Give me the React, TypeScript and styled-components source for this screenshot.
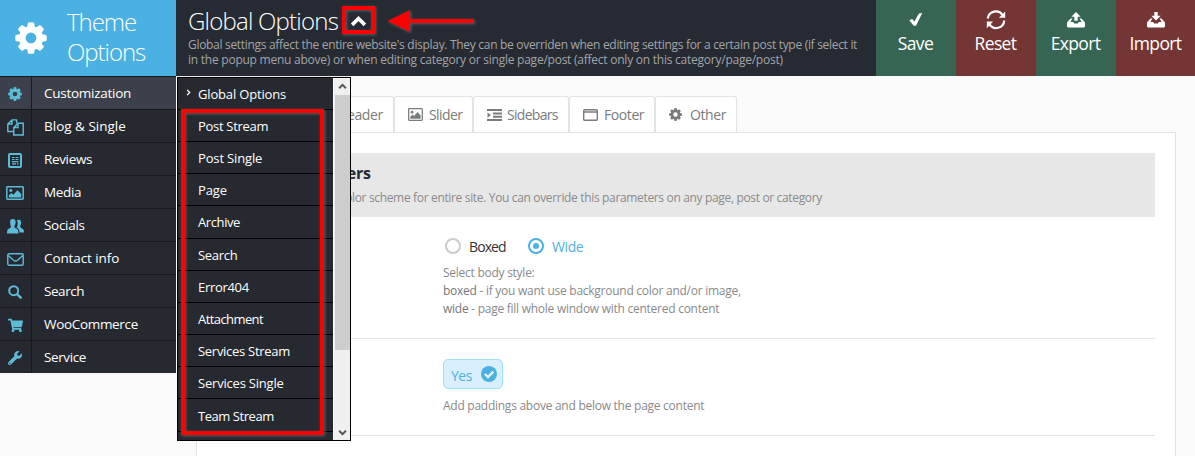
import React from 'react';
import styled, { createGlobalStyle } from 'styled-components';
import { FaShoppingCart, FaWrench } from 'react-icons/fa';

const GlobalStyle = createGlobalStyle`
  * { box-sizing: border-box; }
  html, body { margin: 0; height: 100%; overflow: hidden; }
  body {
    background: #fafafa;
    font-family: 'Open Sans', 'Noto Sans', sans-serif;
    color: #222;
  }
`;

const Page = styled.div`
  position: relative;
  height: 456px;
  overflow: hidden;
`;

/* ---------- header ---------- */

const Header = styled.header`
  display: flex;
  height: 76px;
  margin-right: -1px;
  background: #262a32;
`;

const Brand = styled.div`
  display: flex;
  align-items: center;
  width: 176px;
  padding-left: 15px;
  gap: 20px;
  background: #4bb1e2;
  color: #fff;
`;

const BrandName = styled.div`
  font-size: 24px;
  font-weight: 300;
  line-height: 30px;
  letter-spacing: -1.05px;
  padding-bottom: 2px;
`;

const HeaderInfo = styled.div`
  flex: 1;
  padding: 5px 0 0 12px;
  white-space: nowrap;
`;

const HeaderTitle = styled.h1`
  margin: 0;
  display: flex;
  align-items: center;
  gap: 12px;
  color: #fff;
  font-size: 24px;
  font-weight: 300;
  line-height: 32px;
  letter-spacing: -0.78px;
`;

const HeaderText = styled.p<{ $track: number }>`
  margin: 0;
  color: #a3a5a8;
  font-size: 12px;
  line-height: 15px;
  letter-spacing: ${(p) => p.$track}px;
`;

const Action = styled.button<{ $tone: 'green' | 'red' }>`
  display: flex;
  flex-direction: column;
  align-items: center;
  flex: none;
  width: 80px;
  height: 76px;
  padding: 8px 1px 0 0;
  border: 0;
  background: ${(p) => (p.$tone === 'green' ? '#376554' : '#733634')};
  color: #fff;
  font: 400 17.5px/24px 'Open Sans', sans-serif;
  letter-spacing: -0.65px;
  svg { margin-bottom: -1px; }
`;

/* ---------- body ---------- */

const Body = styled.div`
  display: flex;
  align-items: flex-start;
`;

const Sidebar = styled.nav`
  flex: none;
  width: 176px;
  background: #262a30;
`;

const NavItem = styled.a<{ $active?: boolean }>`
  display: flex;
  height: 33px;
  border-top: 1px solid #17191d;
  background: ${(p) => (p.$active ? '#3b404a' : 'transparent')};
  color: #fff;
`;

const NavIcon = styled.span`
  display: flex;
  align-items: center;
  justify-content: center;
  width: 32px;
  padding: 2px 1px 0 0;
  border-right: 1px solid #17191d;
  color: #5cbcd8;
`;

const NavLabel = styled.span<{ $track: number }>`
  padding-left: 12px;
  font-size: 13.5px;
  line-height: 33px;
  letter-spacing: ${(p) => p.$track}px;
`;

const Main = styled.main`
  flex: 1;
  padding: 20px 19px 0 20px;
`;

const Tabs = styled.div`
  display: flex;
  height: 36px;
  padding-left: 106px;
`;

const Tab = styled.div<{ $width: number; $track: number; $gap?: number }>`
  display: flex;
  align-items: center;
  gap: ${(p) => p.$gap ?? 6}px;
  flex: none;
  width: ${(p) => p.$width}px;
  padding-left: 13px;
  border: 1px solid #e3e3e3;
  border-bottom: 0;
  border-radius: 3px 3px 0 0;
  background: #fff;
  color: #7b7b7b;
  font-size: 14px;
  letter-spacing: ${(p) => p.$track}px;
`;

const Panel = styled.section`
  height: 400px;
  padding: 20px 20px 0;
  border: 1px solid #e3e3e3;
  background: #fff;
`;

const SectionHead = styled.div`
  height: 64px;
  padding: 8px 0 0 20px;
  background: #e7e7e7;
  white-space: nowrap;
`;

const SectionTitle = styled.h2`
  margin: 0;
  font-size: 16px;
  font-weight: 700;
  line-height: 24px;
  letter-spacing: -0.25px;
  color: #262a32;
`;

const SectionText = styled.p`
  margin: 4px 0 0;
  width: 585px;
  text-align: right;
  font-size: 12px;
  line-height: 18px;
  letter-spacing: -0.34px;
  color: #8a8a8a;
`;

const Field = styled.div<{ $height: number }>`
  height: ${(p) => p.$height}px;
  padding: 20px 0 0 226px;
  border-bottom: 1px solid #e5e5e5;
`;

const Radios = styled.div`
  display: flex;
  align-items: center;
  height: 18px;
  padding-left: 2px;
  gap: 8px;
`;

const RadioMark = styled.i<{ $on?: boolean }>`
  display: flex;
  align-items: center;
  justify-content: center;
  flex: none;
  width: 16px;
  height: 16px;
  border: 2px solid ${(p) => (p.$on ? '#4bb1e2' : '#cbcbcb')};
  border-radius: 50%;
  &::after {
    content: '';
    width: 6px;
    height: 6px;
    border-radius: 50%;
    background: ${(p) => (p.$on ? '#4bb1e2' : 'transparent')};
  }
`;

const RadioLabel = styled.span<{ $on?: boolean; $track: number }>`
  width: 51px;
  padding-top: 2px;
  font-size: 14px;
  line-height: 18px;
  letter-spacing: ${(p) => p.$track}px;
  color: ${(p) => (p.$on ? '#4bb1e2' : '#333')};
`;

const Hint = styled.p<{ $top: number }>`
  margin: ${(p) => p.$top}px 0 0;
  font-size: 12px;
  line-height: 18px;
  letter-spacing: -0.26px;
  color: #8a8a8a;
  b { font-weight: 500; color: #777; }
`;

const Toggle = styled.div`
  display: flex;
  align-items: center;
  justify-content: space-between;
  width: 60px;
  height: 30px;
  padding: 0 5px 0 7px;
  border: 1px solid #99e1f3;
  border-radius: 5px;
  background: #d9effd;
  color: #4bb1e2;
  font-size: 14px;
  letter-spacing: -0.5px;
  span { padding-top: 2px; }
`;

/* ---------- popup menu ---------- */

const PopupEdge = styled.div`
  position: absolute;
  left: 176px;
  top: 76px;
  width: 175px;
  height: 365px;
  border-left: 1px solid #fff;
  border-top: 1px solid #e9e9e9;
`;

const Popup = styled.div`
  display: flex;
  width: 174px;
  height: 364px;
  border: 1px solid #000;
  background: #262a30;
  overflow: hidden;
`;

const PopupList = styled.div`
  flex: 1;
  margin-top: -0.4px;
`;

const PopupItem = styled.div<{ $track: number }>`
  display: flex;
  align-items: center;
  height: 32.2px;
  padding: 1px 0 0 7px;
  border-bottom: 1px solid #000;
  color: #fff;
  font-size: 13px;
  white-space: nowrap;
  letter-spacing: ${(p) => p.$track}px;
`;

const PopupMark = styled.span`
  display: flex;
  width: 13px;
  padding-bottom: 2px;
`;

const Scrollbar = styled.div`
  display: flex;
  flex-direction: column;
  align-items: center;
  width: 17px;
  padding: 4px 0 3px;
  border-left: 1px solid #fff;
  background: #f0f0f0;
  color: #555;
`;

const Thumb = styled.div`
  width: 15px;
  height: 255px;
  margin: 4px 0 auto;
  background: #cdcdcd;
`;

/* ---------- annotations ---------- */

const Callout = styled.div<{ $x: number; $y: number; $w: number; $h: number }>`
  position: absolute;
  left: ${(p) => p.$x}px;
  top: ${(p) => p.$y}px;
  width: ${(p) => p.$w}px;
  height: ${(p) => p.$h}px;
  border: 4px solid #fe0000;
  filter: drop-shadow(1px 1px 1.5px rgba(150, 150, 150, 0.5));
`;

const Arrow = styled.svg`
  position: absolute;
  left: 386px;
  top: 8px;
  filter: drop-shadow(1px 1px 1.5px rgba(150, 150, 150, 0.5));
`;

/* ---------- icons ---------- */

const Gear = ({ size }: { size: number }) => (
  <svg width={size} height={size} viewBox="0 0 32 32" fill="currentColor">
    <circle cx="16" cy="16" r="8.7" fill="none" stroke="currentColor" strokeWidth="6.6" />
    {[0, 45, 90, 135, 180, 225, 270, 315].map((a) => (
      <path key={a} d="M12 6 L13 .6 Q16 -.1 19 .6 L20 6Z" transform={`rotate(${a} 16 16)`} />
    ))}
  </svg>
);

const Docs = () => (
  <svg width="17" height="17" viewBox="0 0 17 17" fill="none" stroke="currentColor" strokeWidth="1.4">
    <path d="M6.8 12.5H.8V5L5 .9H9.6V4.2M5 .9V5H.8" />
    <path d="M6.8 16V8.5L11 4.3H16.2V16ZM11 4.3V8.5H6.8" />
  </svg>
);

const Review = () => (
  <svg width="14" height="15" viewBox="0 0 14 15" fill="none" stroke="currentColor">
    <rect x="1" y="1" width="12" height="13" rx="1" strokeWidth="2" />
    <path d="M4 4.500h2.500M7.500 4.500h3M4 6.500h2.500M7.500 6.500h3M4 8.600h6.500M4 10.800h4M9 10.800h1.500" strokeWidth="1.200" />
  </svg>
);

const Picture = ({ w, h }: { w: number; h: number }) => (
  <svg width={w} height={h} viewBox="0 0 18 15" preserveAspectRatio="none">
    <rect x=".8" y=".8" width="16.4" height="13.4" rx=".8" fill="none" stroke="currentColor" strokeWidth="1.5" />
    <circle cx="4.8" cy="4.8" r="1.6" fill="currentColor" />
    <path d="M2.8 12.3V10L5.5 7.6 7.3 9.3 11.5 4.6 15.2 8.6V12.3Z" fill="currentColor" />
  </svg>
);

const People = () => (
  <svg width="17" height="15" viewBox="0 0 17 15" fill="currentColor">
    <path d="M5.800 0C8 0 8.800 1.600 8.600 3.700c-.1 1.500-.7 2.500-1.100 3.200-.2 1.200 0 1.800 .8 2.200 2.500 1 3 1.800 3.200 5.400H0c.1-3.500 .7-4.400 3.100-5.400 .8-.4 1-1 .7-2.200C3.500 6.200 3.200 5.200 3.100 3.700 2.900 1.600 3.700 0 5.800 0Z" />
    <path d="M11.600 .8c2 0 2.700 1.400 2.500 3.300-.1 1.500-.7 2.300-.9 2.900 0 1 .2 1.500 .9 1.900 2.400 .9 2.800 1.700 2.900 4.600H12.500c-.2-2.800-1-3.900-2.900-4.900 .8-1.200 1.300-3 1-5.200C10.400 2.200 10 1.500 9.800 1.300 10.200 1 10.800 .8 11.600 .8Z" />
  </svg>
);

const Envelope = () => (
  <svg width="17" height="13" viewBox="0 0 17 13" fill="none" stroke="currentColor" strokeWidth="1.4">
    <rect x=".8" y=".8" width="15.400" height="11.400" rx="1.200" />
    <path d="M1.200 2.500 6.500 7.200Q8.500 8.800 10.500 7.200L15.800 2.500" />
  </svg>
);

const Magnifier = () => (
  <svg width="14" height="14" viewBox="0 0 14 14" fill="none" stroke="currentColor" strokeLinecap="round">
    <circle cx="5.700" cy="5.700" r="4.500" strokeWidth="2" />
    <path d="M9.300 9.300 12.700 12.700" strokeWidth="2.400" />
  </svg>
);

const Indent = () => (
  <svg width="15" height="12" viewBox="0 0 15 12" fill="currentColor">
    <path d="M0 0h15v2H0zM6 3.400h9v2H6zM6 6.700h9v2H6zM0 10h15v2H0zM.5 3.400 4 6 .5 8.700z" />
  </svg>
);

const Window = () => (
  <svg width="15" height="12" viewBox="0 0 15 12" fill="none" stroke="currentColor">
    <rect x=".7" y=".7" width="13.600" height="10.600" rx="1" strokeWidth="1.400" />
    <path d="M1 3h13" strokeWidth="1.500" />
  </svg>
);

const Check = () => (
  <svg width="22" height="24" viewBox="0 0 22 24" fill="currentColor">
    <path d="M4.300 12.300 7.200 10.900 9.300 13.500 14 5.600 17.300 5 11 17.800H8.700Z" />
  </svg>
);

const Refresh = () => (
  <svg width="22" height="24" viewBox="0 0 22 24" fill="none" stroke="currentColor" strokeWidth="2.200">
    <path d="M2.800 10.500A8 8 0 0 1 17.600 7.300M19.200 12.500A8 8 0 0 1 4.400 16.200" />
    <path d="M20.200 3.500V9.800H13.900ZM1.800 20.200V13.600H8.100Z" fill="currentColor" stroke="none" />
  </svg>
);

const Tray = ({ down }: { down?: boolean }) => (
  <svg width="22" height="24" viewBox="0 0 22 24" fill="currentColor">
    <path d="M5.500 10.500H7.500L5.300 14H8.200L9.200 15.600H12.800L13.800 14H16.700L14.500 10.500H16.500L20 14.500V18.500L19 19.500H3L2 18.500V14.500Z" />
    <path d={down ? 'M9.300 4H12.700V7.800H15.700L11 12.600 6.300 7.800H9.300Z' : 'M9.300 12.700H12.700V8.800H15.700L11 4 6.300 8.800H9.300Z'} />
  </svg>
);

const Chevron = ({ size, thick, turn }: { size: number; thick: number; turn: number }) => (
  <svg width={size} height={size} viewBox="0 0 16 16" fill="none" stroke="currentColor" strokeWidth={thick}>
    <path d="M2 11.200 8 5.200 14 11.200" transform={`rotate(${turn} 8 8)`} />
  </svg>
);

const CheckBadge = () => (
  <svg width="16" height="16" viewBox="0 0 16 16">
    <circle cx="8" cy="8" r="8" fill="#4bb1e2" />
    <path d="M3.900 8 7 11 12.300 5.700" fill="none" stroke="#e4f4fd" strokeWidth="2.400" />
  </svg>
);

const nav: [string, number, React.ReactNode][] = [
  ['Customization', -0.27, <Gear size={14} />],
  ['Blog & Single', 0, <Docs />],
  ['Reviews', -0.35, <Review />],
  ['Media', -0.35, <Picture w={18} h={14} />],
  ['Socials', -0.3, <People />],
  ['Contact info', -0.1, <Envelope />],
  ['Search', -0.45, <Magnifier />],
  ['WooCommerce', -0.32, <FaShoppingCart size={15} />],
  ['Service', -0.4, <FaWrench size={14} />],
];

const popup: [string, number][] = [
  ['Global Options', -0.17],
  ['Post Stream', -0.3],
  ['Post Single', -0.15],
  ['Page', -0.15],
  ['Archive', -0.4],
  ['Search', -0.3],
  ['Error404', -0.3],
  ['Attachment', -0.58],
  ['Services Stream', -0.28],
  ['Services Single', -0.2],
  ['Team Stream', -0.45],
  ['', 0],
];

export default function App() {
  return (
    <Page>
      <GlobalStyle />
      <Header>
        <Brand>
          <Gear size={32} />
          <BrandName>
            Theme
            <br />
            Options
          </BrandName>
        </Brand>
        <HeaderInfo>
          <HeaderTitle>
            Global Options <Chevron size={17} thick={3.4} turn={0} />
          </HeaderTitle>
          <HeaderText $track={-0.305}>
            Global settings affect the entire website's display. They can be overriden when editing settings for a
            certain post type (if select it
          </HeaderText>
          <HeaderText $track={-0.24}>
            in the popup menu above) or when editing category or single page/post (affect only on this
            category/page/post)
          </HeaderText>
        </HeaderInfo>
        <Action $tone="green"><Check />Save</Action>
        <Action $tone="red"><Refresh />Reset</Action>
        <Action $tone="green"><Tray />Export</Action>
        <Action $tone="red"><Tray down />Import</Action>
      </Header>

      <Body>
        <Sidebar>
          {nav.map(([label, track, icon], i) => (
            <NavItem key={label} $active={i === 0}>
              <NavIcon>{icon}</NavIcon>
              <NavLabel $track={track}>{label}</NavLabel>
            </NavItem>
          ))}
        </Sidebar>
        <Main>
          <Tabs>
            <Tab $width={92} $track={-0.4}><Window /><span>Header</span></Tab>
            <Tab $width={79} $track={-0.6}><Picture w={15} h={13} /><span>Slider</span></Tab>
            <Tab $width={96} $track={-0.7} $gap={5}><Indent /><span>Sidebars</span></Tab>
            <Tab $width={86} $track={-0.42}><Window /><span>Footer</span></Tab>
            <Tab $width={82} $track={-0.4} $gap={8}><Gear size={13} /><span>Other</span></Tab>
          </Tabs>
          <Panel>
            <SectionHead>
              <SectionTitle>Body parameters</SectionTitle>
              <SectionText>
                Body style and color scheme for entire site. You can override this parameters on any page, post or
                category
              </SectionText>
            </SectionHead>
            <Field $height={122}>
              <Radios>
                <RadioMark />
                <RadioLabel $track={-0.9}>Boxed</RadioLabel>
                <RadioMark $on />
                <RadioLabel $on $track={-0.4}>Wide</RadioLabel>
              </Radios>
              <Hint $top={9}>
                Select body style:
                <br />
                <b>boxed</b> - if you want use background color and/or image,
                <br />
                <b>wide</b> - page fill whole window with centered content
              </Hint>
            </Field>
            <Field $height={97}>
              <Toggle>
                <span>Yes</span>
                <CheckBadge />
              </Toggle>
              <Hint $top={8}>Add paddings above and below the page content</Hint>
            </Field>
          </Panel>
        </Main>
      </Body>

      <PopupEdge>
        <Popup>
          <PopupList>
            {popup.map(([label, track], i) => (
              <PopupItem key={i} $track={track}>
                <PopupMark>{i === 0 && <Chevron size={7} thick={3} turn={90} />}</PopupMark>
                {label}
              </PopupItem>
            ))}
          </PopupList>
          <Scrollbar>
            <Chevron size={9} thick={3.5} turn={0} />
            <Thumb />
            <Chevron size={9} thick={3.5} turn={180} />
          </Scrollbar>
        </Popup>
      </PopupEdge>

      <Callout $x={181} $y={109} $w={143} $h={326} />
      <Callout $x={342} $y={6} $w={33} $h={28} />
      <Arrow width="92" height="28" viewBox="0 0 92 28" fill="#fe0000">
        <path d="M1.500 13 24 2V11H88V15H24V24Z" />
      </Arrow>
    </Page>
  );
}
